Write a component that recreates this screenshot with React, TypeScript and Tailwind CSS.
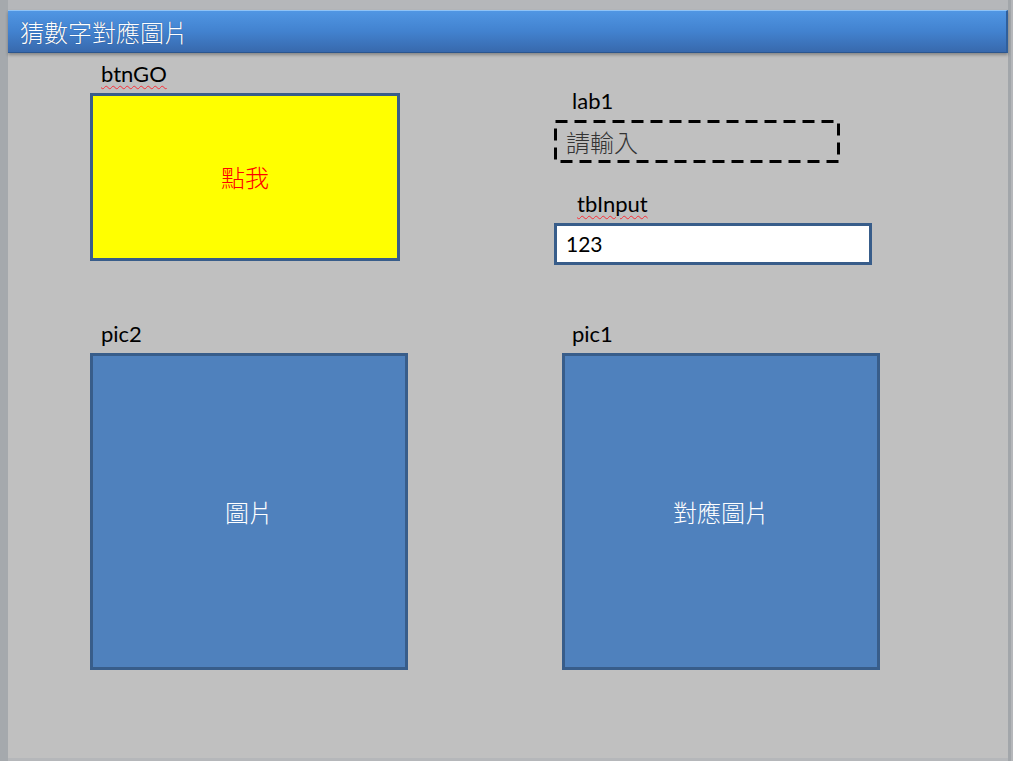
const latin = "font-['Lato','Liberation_Sans','Noto_Sans_CJK_TC',sans-serif]";
const cjk = "font-['Noto_Sans_CJK_TC','Liberation_Sans',sans-serif] font-light";

function Label({ text, offset, squiggle }: { text: string; offset: string; squiggle?: boolean }) {
  return (
    <div className={`h-[33px] flex items-center pb-[6px] text-[22px] text-black ${latin} ${offset}`}>
      <span className={squiggle ? "underline decoration-wavy decoration-red-500 decoration-1 underline-offset-[3px]" : ""}>
        {text}
      </span>
    </div>
  );
}

function PicBox({ text }: { text: string }) {
  return (
    <div className={`w-[318px] h-[317px] bg-[#4f81bd] border-[3px] border-[#385d8a] flex items-center justify-center text-white text-[24px] ${cjk}`}>
      {text}
    </div>
  );
}

export default function App() {
  return (
    <div className="w-[1013px] h-[761px] bg-[#b5b7ba] flex overflow-hidden">
      <div className="w-[8px] bg-[#a5a9ad]" />
      <div className="w-[1000px] flex flex-col pt-[10px] pb-[3px]">
        <div className="relative h-[43px] bg-gradient-to-b from-[#5096e3] via-[#4282cf] to-[#3869ad] border-t border-t-[#8ec3f7] border-b border-b-[#2c568e] border-r-2 border-r-[#2f5f9c] shadow-[0_2px_3px_rgba(0,0,0,0.3)] flex items-center pl-[12px] z-10">
          <span className={`text-white text-[24px] leading-none [text-shadow:0_0_1px_rgba(20,50,100,0.8)] ${cjk}`}>
            猜數字對應圖片
          </span>
        </div>
        <div className="flex-1 bg-[#c0c0c0] pl-[82px] pt-[7px]">
          <div className="flex h-[205px]">
            <div className="w-[464px] flex flex-col">
              <Label text="btnGO" offset="pl-[11px]" squiggle />
              <div className={`w-[310px] h-[168px] bg-[#ffff00] border-[3px] border-[#385d8a] flex items-center justify-center text-[#ff0000] text-[24px] ${cjk}`}>
                點我
              </div>
            </div>
            <div className="flex flex-col pt-[27px]">
              <Label text="lab1" offset="pl-[18px]" />
              <div className={`relative w-[286px] h-[43px] flex items-center pl-[12px] text-[24px] text-[#333333] ${cjk}`}>
                <svg className="absolute inset-0" width="286" height="43">
                  <rect x="1.5" y="1.5" width="283" height="40" fill="none" stroke="#000" strokeWidth="3" strokeDasharray="12 7" />
                </svg>
                請輸入
              </div>
              <div className="mt-[27px]">
                <Label text="tbInput" offset="pl-[23px]" squiggle />
              </div>
              <div className={`w-[318px] h-[42px] bg-white border-[3px] border-[#385d8a] flex items-center pl-[9px] text-[21px] text-black ${latin}`}>
                123
              </div>
            </div>
          </div>
          <div className="flex mt-[55px]">
            <div className="w-[472px] flex flex-col">
              <Label text="pic2" offset="pl-[11px]" />
              <PicBox text="圖片" />
            </div>
            <div className="flex flex-col">
              <Label text="pic1" offset="pl-[10px]" />
              <PicBox text="對應圖片" />
            </div>
          </div>
        </div>
      </div>
      <div className="w-[3px] bg-[#a2a6aa]" />
      <div className="w-[2px] bg-[#b5b7ba]" />
    </div>
  );
}
